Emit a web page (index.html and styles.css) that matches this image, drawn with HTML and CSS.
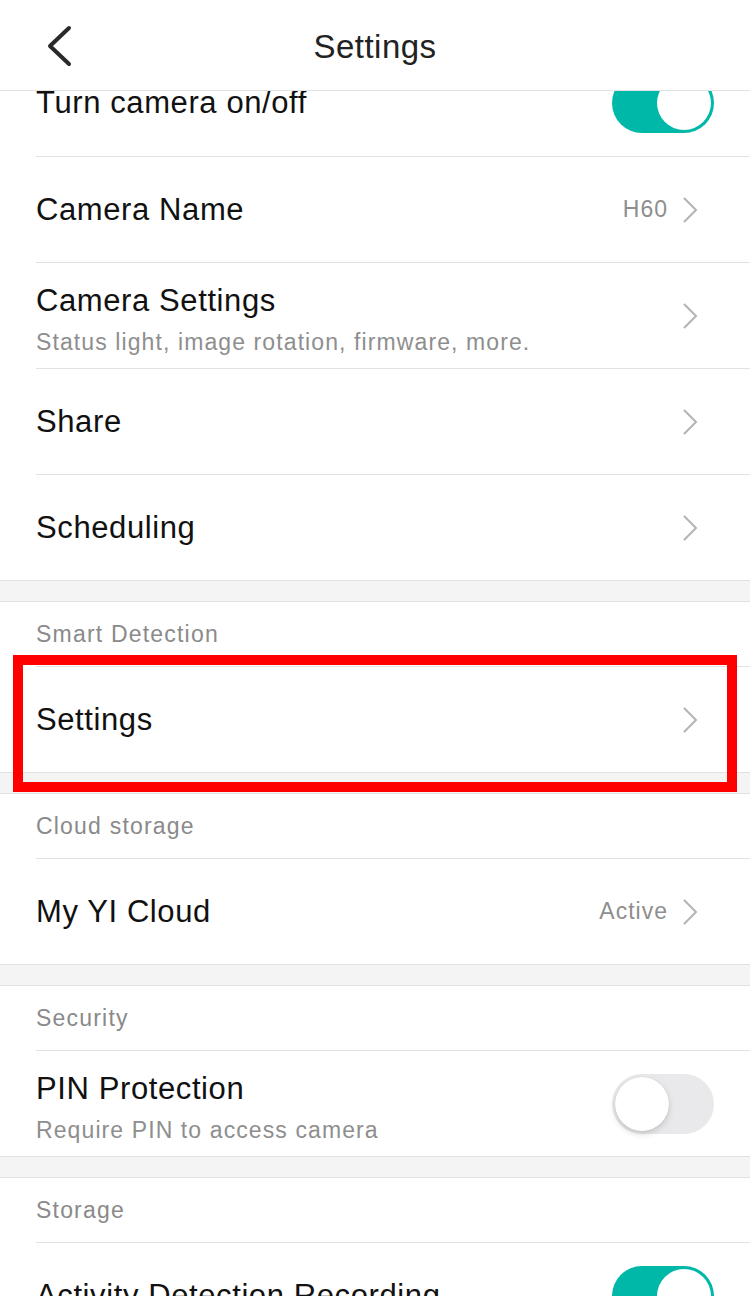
FILE: index.html
```html
<!DOCTYPE html>
<html lang="en">

<head>
   <meta charset="UTF-8">
   <meta name="viewport" content="width=device-width, initial-scale=1.0">
   <title>Settings</title>
   <link rel="stylesheet" href="styles.css">
</head>

<body>

   <header class="top-bar">
       <svg class="back-icon" width="30" height="42" viewBox="0 0 30 42">
           <path d="M24 3 L5 21 L24 39" fill="none" stroke="#2a2a2a" stroke-width="4" stroke-linecap="round" stroke-linejoin="round"/>
       </svg>
       <h1 class="title">Settings</h1>
   </header>

   <main class="list">
       <section class="group">
           <div class="row">
               <span class="row-label">Turn camera on/off</span>
               <span class="toggle on"><span class="knob"></span></span>
           </div>
           <div class="row">
               <span class="row-label">Camera Name</span>
               <span class="row-value">H60</span>
               <svg class="chevron" width="16" height="28" viewBox="0 0 16 28"><path d="M2 2 L14 14 L2 26" fill="none" stroke="#b3b3b3" stroke-width="2"/></svg>
           </div>
           <div class="row">
               <div class="row-text">
                   <span class="row-label">Camera Settings</span>
                   <span class="row-sub">Status light, image rotation, firmware, more.</span>
               </div>
               <svg class="chevron" width="16" height="28" viewBox="0 0 16 28"><path d="M2 2 L14 14 L2 26" fill="none" stroke="#b3b3b3" stroke-width="2"/></svg>
           </div>
           <div class="row">
               <span class="row-label">Share</span>
               <svg class="chevron" width="16" height="28" viewBox="0 0 16 28"><path d="M2 2 L14 14 L2 26" fill="none" stroke="#b3b3b3" stroke-width="2"/></svg>
           </div>
           <div class="row">
               <span class="row-label">Scheduling</span>
               <svg class="chevron" width="16" height="28" viewBox="0 0 16 28"><path d="M2 2 L14 14 L2 26" fill="none" stroke="#b3b3b3" stroke-width="2"/></svg>
           </div>
       </section>

       <section class="group">
           <div class="group-title">Smart Detection</div>
           <div class="row">
               <span class="row-label">Settings</span>
               <svg class="chevron" width="16" height="28" viewBox="0 0 16 28"><path d="M2 2 L14 14 L2 26" fill="none" stroke="#b3b3b3" stroke-width="2"/></svg>
           </div>
       </section>

       <section class="group">
           <div class="group-title">Cloud storage</div>
           <div class="row">
               <span class="row-label">My YI Cloud</span>
               <span class="row-value">Active</span>
               <svg class="chevron" width="16" height="28" viewBox="0 0 16 28"><path d="M2 2 L14 14 L2 26" fill="none" stroke="#b3b3b3" stroke-width="2"/></svg>
           </div>
       </section>

       <section class="group">
           <div class="group-title">Security</div>
           <div class="row">
               <div class="row-text">
                   <span class="row-label">PIN Protection</span>
                   <span class="row-sub">Require PIN to access camera</span>
               </div>
               <span class="toggle"><span class="knob"></span></span>
           </div>
       </section>

       <section class="group">
           <div class="group-title">Storage</div>
           <div class="row">
               <span class="row-label">Activity Detection Recording</span>
               <span class="toggle on"><span class="knob"></span></span>
           </div>
       </section>
   </main>

   <div class="highlight"></div>

</body>

</html>
```

FILE: styles.css
```css
body {
    font-family: "Liberation Sans", Arial, sans-serif;
    margin: 0;
    background-color: #f4f4f4;
    color: #111;
    height: 1296px;
    overflow: hidden;
}

.top-bar {
    position: fixed;
    top: 0;
    left: 0;
    right: 0;
    height: 90px;
    background-color: #fff;
    border-bottom: 1px solid #e2e2e2;
    display: flex;
    align-items: center;
    justify-content: center;
    z-index: 2;
}

.back-icon {
    position: absolute;
    left: 45px;
    top: 25px;
}

.title {
    margin: 3px 0 0;
    font-size: 33px;
    font-weight: normal;
    color: #222;
    letter-spacing: 0.5px;
}

.list {
    padding-top: 50px;
    display: flex;
    flex-direction: column;
    gap: 20px;
}

.group {
    background-color: #fff;
    border-top: 1px solid #e2e2e2;
    border-bottom: 1px solid #e2e2e2;
    padding-left: 36px;
}

.group:first-child {
    border-top: none;
}

.group-title {
    height: 64px;
    display: flex;
    align-items: center;
    font-size: 23px;
    color: #8a8a8a;
    letter-spacing: 1.2px;
}

.row {
    height: 105px;
    display: flex;
    align-items: center;
    padding-right: 36px;
    border-top: 1px solid #e2e2e2;
}

.group:first-child .row:first-child {
    border-top: none;
    height: 106px;
}

.row-text {
    display: flex;
    flex-direction: column;
    gap: 10px;
    flex-grow: 1;
    margin-top: 7px;
}

.row > .row-label {
    flex-grow: 1;
}

.row-label {
    font-size: 31px;
    color: #111;
    letter-spacing: 0.6px;
}

.row-sub {
    font-size: 23px;
    color: #8e8e8e;
    letter-spacing: 1.1px;
}

.row-value {
    font-size: 23px;
    color: #8e8e8e;
    margin-right: 14px;
    letter-spacing: 1px;
}

.chevron {
    flex-shrink: 0;
    margin-right: 16px;
}

.toggle {
    width: 102px;
    height: 60px;
    border-radius: 30px;
    background-color: #e9e9eb;
    display: flex;
    align-items: center;
    padding: 0 3px;
    box-sizing: border-box;
    flex-shrink: 0;
}

.toggle .knob {
    width: 54px;
    height: 54px;
    border-radius: 50%;
    background-color: #fff;
    box-shadow: 0 3px 6px rgba(0, 0, 0, 0.15), 0 0 1px rgba(0, 0, 0, 0.15);
}

.toggle.on {
    background-color: #00b8a8;
    justify-content: flex-end;
}

.toggle.on .knob {
    box-shadow: none;
}

.highlight {
    position: absolute;
    left: 13px;
    top: 655px;
    width: 724px;
    height: 137px;
    border: 10px solid #ff0000;
    box-sizing: border-box;
}
```
